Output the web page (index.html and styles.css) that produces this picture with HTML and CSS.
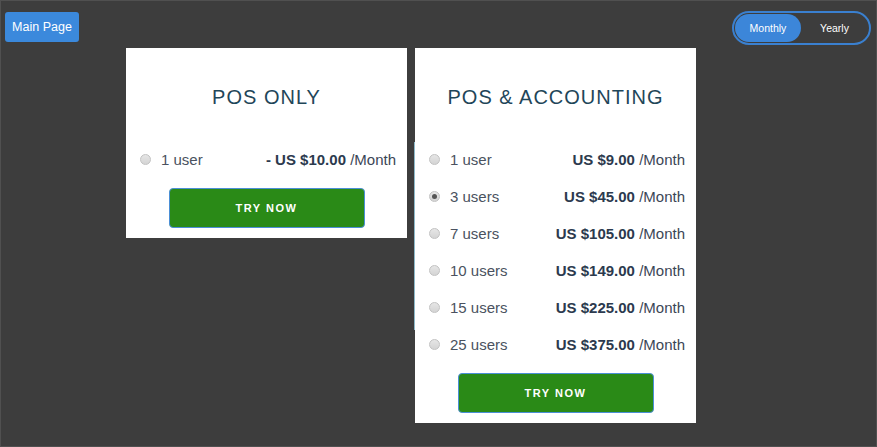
FILE: index.html
```html
<!DOCTYPE html>
<html>
<head>
<meta charset="utf-8">
<link rel="stylesheet" href="styles.css">
</head>
<body>
<div class="page">
  <div class="topbar">
    <button class="main-btn">Main Page</button>
    <div class="toggle">
      <span class="opt active">Monthly</span>
      <span class="opt">Yearly</span>
    </div>
  </div>
  <div class="cards">
    <div class="card">
      <div class="card-head"><h2 class="title">POS ONLY</h2></div>
      <div class="row">
        <span class="radio"></span>
        <span class="users">1 user</span>
        <span class="price"><b>- US $10.00</b> /Month</span>
      </div>
      <button class="try">TRY NOW</button>
    </div>
    <div class="card card-acc">
      <div class="card-head"><h2 class="title">POS &amp; ACCOUNTING</h2></div>
      <div class="row">
        <span class="radio"></span>
        <span class="users">1 user</span>
        <span class="price"><b>US $9.00</b> /Month</span>
      </div>
      <div class="row">
        <span class="radio checked"></span>
        <span class="users">3 users</span>
        <span class="price"><b>US $45.00</b> /Month</span>
      </div>
      <div class="row">
        <span class="radio"></span>
        <span class="users">7 users</span>
        <span class="price"><b>US $105.00</b> /Month</span>
      </div>
      <div class="row">
        <span class="radio"></span>
        <span class="users">10 users</span>
        <span class="price"><b>US $149.00</b> /Month</span>
      </div>
      <div class="row">
        <span class="radio"></span>
        <span class="users">15 users</span>
        <span class="price"><b>US $225.00</b> /Month</span>
      </div>
      <div class="row">
        <span class="radio"></span>
        <span class="users">25 users</span>
        <span class="price"><b>US $375.00</b> /Month</span>
      </div>
      <button class="try">TRY NOW</button>
    </div>
  </div>
</div>
</body>
</html>
```
FILE: styles.css
```css
html, body {
  margin: 0;
  padding: 0;
  background: #3d3d3d;
}
.page {
  width: 877px;
  height: 447px;
  box-sizing: border-box;
  border: 1px solid #505050;
  background: #3d3d3d;
  font-family: "Liberation Sans", Arial, sans-serif;
  overflow: hidden;
}
.topbar {
  height: 47px;
  box-sizing: border-box;
  padding: 10px 5px 0 4px;
  display: flex;
  justify-content: space-between;
  align-items: flex-start;
}
.main-btn {
  margin-top: 1px;
  width: 74px;
  height: 30px;
  border: none;
  border-radius: 3px;
  background: #3b89dc;
  color: #fff;
  font-family: "Liberation Sans", Arial, sans-serif;
  font-size: 12.5px;
  padding: 0;
}
.toggle {
  width: 139px;
  height: 34px;
  box-sizing: border-box;
  border: 2px solid #3a80d0;
  border-radius: 17px;
  padding: 1px;
  display: flex;
}
.opt {
  height: 28px;
  display: flex;
  align-items: center;
  justify-content: center;
  color: #fff;
  font-size: 10.5px;
  flex: 1;
}
.opt.active {
  flex: 0 0 66px;
  background: #3c86d9;
  border-radius: 14px;
}
.cards {
  display: flex;
  align-items: flex-start;
  gap: 8px;
  padding-left: 125px;
}
.card {
  position: relative;
  width: 281px;
  background: #fff;
  padding-bottom: 10px;
}
.card-acc::before {
  content: "";
  position: absolute;
  left: -1px;
  top: 94px;
  width: 1px;
  height: 188px;
  background: #8db9c9;
}
.card-head {
  height: 93px;
  box-sizing: border-box;
  padding-top: 37px;
}
.title {
  margin: 0;
  text-align: center;
  font-weight: normal;
  font-size: 20px;
  line-height: 24px;
  letter-spacing: 1px;
  color: #1f4659;
}
.row {
  height: 37px;
  display: flex;
  align-items: center;
  padding: 0 11px 0 14px;
  font-size: 15px;
  color: #4b5563;
}
.radio {
  width: 9px;
  height: 9px;
  border-radius: 50%;
  border: 1px solid #c2c2c2;
  background: linear-gradient(#e6e6e6, #d4d4d4);
  margin-right: 10px;
  position: relative;
}
.radio.checked::after {
  content: "";
  position: absolute;
  left: 2px;
  top: 2px;
  width: 5px;
  height: 5px;
  border-radius: 50%;
  background: #555;
}
.users {
  color: #4a5260;
}
.price {
  margin-left: auto;
  color: #3b4656;
}
.price b {
  color: #2c3a4e;
}
.try {
  display: block;
  margin: 10px auto 0;
  width: 196px;
  height: 40px;
  border: 1px solid #4b8fd6;
  border-radius: 4px;
  background: #2a8a17;
  color: #fff;
  font-family: "Liberation Sans", Arial, sans-serif;
  font-weight: bold;
  font-size: 11px;
  letter-spacing: 1.5px;
  padding: 0;
}
```
